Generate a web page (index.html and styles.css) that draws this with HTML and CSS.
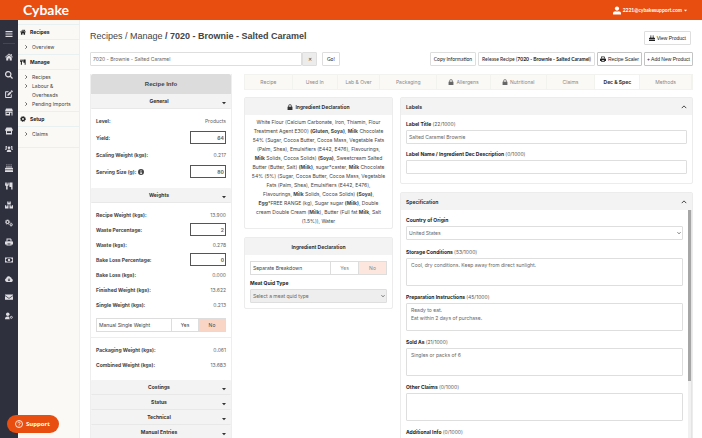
FILE: index.html
```html
<!DOCTYPE html>
<html lang="en">
<head>
  <meta charset="UTF-8">
  <meta name="viewport" content="width=device-width, initial-scale=1.0">
  <title>Cybake - Recipes</title>
  <link rel="stylesheet" href="styles.css">
</head>
<body>
  <svg class="sprite" aria-hidden="true">
    <symbol id="menu" viewBox="0 0 16 16"><path d="M1 2h14v2.4H1zM1 6.8h14v2.4H1zM1 11.6h14V14H1z"/></symbol>
    <symbol id="home" viewBox="0 0 16 16"><path d="M8 1 0 8l1 1.2L8 3.200l7 6L16 8l-2.500-2.200V2h-2v2.100zM8 4.500 2.500 9.200V15h4v-4h3v4h4V9.200z"/></symbol>
    <symbol id="search" viewBox="0 0 16 16"><path fill-rule="evenodd" d="M6.500 0a6.500 6.500 0 1 0 3.700 11.800L14.200 16l1.800-1.800-4.200-4A6.500 6.500 0 0 0 6.500 0zm0 2.400a4.100 4.100 0 1 1 0 8.200 4.100 4.100 0 0 1 0-8.200z"/></symbol>
    <symbol id="edit" viewBox="0 0 16 16"><path d="M12.600.800a1.200 1.200 0 0 1 1.700 0l1 1a1.200 1.200 0 0 1 0 1.700L14 4.800 11.300 2.100zM10.500 3l2.700 2.700-5.500 5.500-3 .500.400-3.200zM1.500 2.500H8l-2 2H2.200v9.300h9.300V10l2-2v6.500a1.300 1.300 0 0 1-1.300 1.300H1.500A1.400 1.400 0 0 1 .200 14.500V3.800a1.300 1.300 0 0 1 1.300-1.300z"/></symbol>
    <symbol id="store" viewBox="0 0 16 16"><path fill-rule="evenodd" d="M2 1h12l2 5.500H0zM1 7.500h14V15h-2V9.500h-3V15H1zM3 9.500V12h5V9.500z"/></symbol>
    <symbol id="shop" viewBox="0 0 16 16"><path fill-rule="evenodd" d="M3 1h10l2.500 4v1.500a1.800 1.800 0 0 1-1.500 1.700V15H2V8.200A1.800 1.800 0 0 1 .500 6.500V5zM4 8.500V12h8V8.500z"/></symbol>
    <symbol id="users" viewBox="0 0 16 16"><circle cx="8" cy="5.500" r="2.600"/><circle cx="2.600" cy="3.800" r="1.800"/><circle cx="13.400" cy="3.800" r="1.800"/><path d="M3.500 14c0-3 1.600-5 4.500-5s4.500 2 4.500 5zM0 9.500C0 7.500 1 6.300 2.800 6.300c.700 0 1.300.200 1.800.700a5 5 0 0 0-1.500 2.500zM16 9.500c0-2-1-3.200-2.800-3.200-.700 0-1.300.200-1.800.700a5 5 0 0 1 1.500 2.500z"/></symbol>
    <symbol id="cake" viewBox="0 0 16 16"><path d="M3 3.500h1.800V7H3zM7.100 3.500h1.800V7H7.100zM11.200 3.500H13V7h-1.800zM3.900 0l.9 1.500-.9 1.200L3 1.500zM8 0l.9 1.500L8 2.700l-.9-1.200zM12.100 0l.9 1.500-.9 1.200-.9-1.200zM1.500 7.500h13A1.500 1.500 0 0 1 16 9v1.500c-1.500 1.500-2.500.500-4 0-1.500 1-2.500 1-4 0-1.500 1-2.500 1-4 0-1.500.800-2.500 1.200-4 0V9a1.500 1.500 0 0 1 1.500-1.500zM0 12.400c1.500.600 2.500.400 4-.400 1.500.900 2.500.900 4 0 1.500.900 2.500.900 4 0 1.500.800 2.500.900 4 .400V16H0z"/></symbol>
    <symbol id="utensils" viewBox="0 0 16 16"><path d="M0 1h1.400l.4 4h.6L2.700 1h1.500l.4 4h.6l.4-4H7c.8 4.500.5 6-1.800 7.200V15H2.300V8.200C-.300 7-.500 5.500 0 1zM9 1h6v14h-2.600v-5H9C8.500 6 8.500 3.500 9 1z"/></symbol>
    <symbol id="boxes" viewBox="0 0 16 16"><path d="M4.500 1H7v2.500h2V1h2.500v6h-7zM0 8.500h2.500V11h2V8.500H7v6.500H0zM9 8.500h2.500V11h2V8.500H16v6.500H9z"/></symbol>
    <symbol id="cogs" viewBox="0 0 16 16"><circle cx="5" cy="6" r="3" fill="none" stroke="currentColor" stroke-width="2.400"/><circle cx="5" cy="6" r="4.600" fill="none" stroke="currentColor" stroke-width="1.400" stroke-dasharray="1.800 1.800"/><circle cx="12.300" cy="11.300" r="2" fill="none" stroke="currentColor" stroke-width="1.800"/><circle cx="12.300" cy="11.300" r="3.100" fill="none" stroke="currentColor" stroke-width="1.200" stroke-dasharray="1.300 1.300"/></symbol>
    <symbol id="cog" viewBox="0 0 16 16"><circle cx="8" cy="8" r="4.200" fill="none" stroke="currentColor" stroke-width="3.600"/><circle cx="8" cy="8" r="6.800" fill="none" stroke="currentColor" stroke-width="2.200" stroke-dasharray="3.100 2.240"/></symbol>
    <symbol id="print" viewBox="0 0 16 16"><path fill-rule="evenodd" d="M3 1h8.500L13 2.500V6H3zM5 3v3h6V3zM2 6.500h12a2 2 0 0 1 2 2V13h-3v2H3v-2H0V8.500a2 2 0 0 1 2-2zM5 11v2.200h6V11z"/></symbol>
    <symbol id="money" viewBox="0 0 16 16"><path fill-rule="evenodd" d="M0 3h16v10H0zM3.500 4.500a2 2 0 0 1-2 2v3a2 2 0 0 1 2 2h9a2 2 0 0 1 2-2v-3a2 2 0 0 1-2-2z"/><ellipse cx="8" cy="8" rx="2.200" ry="2.700"/></symbol>
    <symbol id="cloud" viewBox="0 0 16 16"><path fill-rule="evenodd" d="M4 14a4 4 0 0 1-1.400-7.700A4.500 4.500 0 0 1 11 4.600a3 3 0 0 1 2.300 3A3.300 3.300 0 0 1 12.800 14zM7 7v2.500H5L8 12.500l3-3H9V7z"/></symbol>
    <symbol id="envelope" viewBox="0 0 16 16"><path d="M0 3h16v1.500L8 10 0 4.500zM0 6.200 8 11.700l8-5.500V13.500H0z"/></symbol>
    <symbol id="usercog" viewBox="0 0 16 16"><circle cx="5.500" cy="4.500" r="3.500"/><path d="M0 14.500C0 11 1.500 9 5 9c1.700 0 2.800.300 3.600 1-.4 1.600 0 3.300 1.200 4.500z"/><circle cx="12.700" cy="10.700" r="2" fill="none" stroke="currentColor" stroke-width="1.800"/></symbol>
    <symbol id="user" viewBox="0 0 16 16"><circle cx="8" cy="4.200" r="4.200"/><path d="M0 16v-2.500C0 10.800 2 9.300 4.500 9.300c2 1 5 1 7 0 2.500 0 4.500 1.500 4.500 4.200V16z"/></symbol>
    <symbol id="lock" viewBox="0 0 16 16"><path d="M1.500 7h2V5a4.500 4.500 0 0 1 9 0v2h2v9h-13zM5.700 7h4.600V5a2.300 2.300 0 0 0-4.600 0z"/></symbol>
    <symbol id="info" viewBox="0 0 16 16"><path fill-rule="evenodd" d="M8 0a8 8 0 1 0 0 16A8 8 0 0 0 8 0zM6.800 3h2.600v2.200H6.800zM6 6.700h3.400v4.500h1V13H6v-1.800h1V8.500H6z"/></symbol>
    <symbol id="right" viewBox="0 0 16 16"><path d="m5 1 7 7-7 7" fill="none" stroke="currentColor" stroke-width="3"/></symbol>
    <symbol id="up" viewBox="0 0 16 16"><path d="m2 11 6-6 6 6" fill="none" stroke="currentColor" stroke-width="2.400"/></symbol>
    <symbol id="down" viewBox="0 0 16 16"><path d="m2 5 6 6 6-6" fill="none" stroke="currentColor" stroke-width="3"/></symbol>
    <symbol id="caret" viewBox="0 0 16 16"><path d="M0 4h16l-8 9z"/></symbol>
    <symbol id="help" viewBox="0 0 16 16"><circle cx="8" cy="8" r="7" fill="none" stroke="currentColor" stroke-width="1.700"/><path d="M5.700 6.500a2.300 2.300 0 1 1 3.600 1.900C8.300 9 8 9.300 8 10.200M8 11.200v1.600" fill="none" stroke="currentColor" stroke-width="1.600"/></symbol>
  </svg>

  <header class="topbar">
    <a class="logo" href="#">Cybake</a>
    <a class="account" href="#"><svg class="icon-lg"><use href="#user"/></svg><span>2221@cybakesupport.com</span><svg class="icon-tiny"><use href="#caret"/></svg></a>
  </header>

  <div class="shell">
    <nav class="rail" aria-label="Main">
      <a class="rail-menu" href="#" aria-label="Menu"><svg><use href="#menu"/></svg></a>
      <a href="#" aria-label="Home"><svg><use href="#home"/></svg></a>
      <a href="#" aria-label="Search"><svg><use href="#search"/></svg></a>
      <a href="#" aria-label="Edit"><svg><use href="#edit"/></svg></a>
      <a href="#" aria-label="Stores"><svg><use href="#store"/></svg></a>
      <a href="#" aria-label="Shop"><svg><use href="#shop"/></svg></a>
      <a href="#" aria-label="Customers"><svg><use href="#users"/></svg></a>
      <a href="#" aria-label="Products"><svg><use href="#cake"/></svg></a>
      <a href="#" aria-label="Recipes"><svg><use href="#utensils"/></svg></a>
      <a href="#" aria-label="Stock"><svg><use href="#boxes"/></svg></a>
      <a href="#" aria-label="Production"><svg><use href="#cogs"/></svg></a>
      <a href="#" aria-label="Print"><svg><use href="#print"/></svg></a>
      <a href="#" aria-label="Finance"><svg><use href="#money"/></svg></a>
      <a href="#" aria-label="Downloads"><svg><use href="#cloud"/></svg></a>
      <a href="#" aria-label="Messages"><svg><use href="#envelope"/></svg></a>
      <a href="#" aria-label="User settings"><svg><use href="#usercog"/></svg></a>
    </nav>

    <nav class="sidebar" aria-label="Recipes">
      <h2><svg class="icon"><use href="#home"/></svg>Recipes</h2>
      <ul>
        <li><svg class="icon-xs"><use href="#right"/></svg><a href="#">Overview</a></li>
      </ul>
      <h2><svg class="icon"><use href="#utensils"/></svg>Manage</h2>
      <ul>
        <li><svg class="icon-xs"><use href="#right"/></svg><a href="#">Recipes</a></li>
        <li><svg class="icon-xs"><use href="#right"/></svg><a href="#">Labour &amp; Overheads</a></li>
        <li><svg class="icon-xs"><use href="#right"/></svg><a href="#">Pending Imports</a></li>
      </ul>
      <h2><svg class="icon"><use href="#cog"/></svg>Setup</h2>
      <ul>
        <li><svg class="icon-xs"><use href="#right"/></svg><a href="#">Claims</a></li>
      </ul>
    </nav>

    <main class="main">
      <div class="title-row">
        <h1>Recipes / Manage <b>/ 7020 - Brownie - Salted Caramel</b></h1>
        <button class="btn btn-view"><svg class="icon"><use href="#cake"/></svg>View Product</button>
      </div>

      <div class="toolbar">
        <div class="combo">
          <input type="text" aria-label="Recipe" value="7020 - Brownie - Salted Caramel">
          <button aria-label="Clear">✕</button>
        </div>
        <button class="btn btn-go">Go!</button>
        <div class="actions">
          <button class="btn">Copy Information</button>
          <button class="btn"><span>Release Recipe (<b>7020 - Brownie - Salted Caramel</b>)</span></button>
          <button class="btn btn-dark"><svg class="icon"><use href="#print"/></svg>Recipe Scaler</button>
          <button class="btn btn-dark">+ Add New Product</button>
        </div>
      </div>

      <div class="columns">
        <section class="info">
          <h2>Recipe Info</h2>
          <button class="info-head">General<svg class="icon-xs"><use href="#caret"/></svg></button>
          <div class="info-body general">
            <div class="row"><span>Level:</span><output>Products</output></div>
            <div class="row"><label for="yield">Yield:</label><input id="yield" type="text" value="64"></div>
            <div class="row"><span>Scaling Weight (kgs):</span><output>0.217</output></div>
            <div class="row"><label for="serving">Serving Size (g): <svg class="icon"><use href="#info"/></svg></label><input id="serving" type="text" value="80"></div>
          </div>
          <button class="info-head">Weights<svg class="icon-xs"><use href="#caret"/></svg></button>
          <div class="info-body">
            <div class="row"><span>Recipe Weight (kgs):</span><output>13.900</output></div>
            <div class="row"><label for="waste">Waste Percentage:</label><input id="waste" type="text" value="2"></div>
            <div class="row"><span>Waste (kgs):</span><output>0.278</output></div>
            <div class="row"><label for="bakeloss">Bake Loss Percentage:</label><input id="bakeloss" type="text" value="0"></div>
            <div class="row"><span>Bake Loss (kgs):</span><output>0.000</output></div>
            <div class="row"><span>Finished Weight (kgs):</span><output>13.622</output></div>
            <div class="row"><span>Single Weight (kgs):</span><output>0.213</output></div>
            <div class="toggle" role="radiogroup" aria-labelledby="manual-weight">
              <span id="manual-weight">Manual Single Weight</span>
              <label><input type="radio" name="manual">Yes</label>
              <label><input type="radio" name="manual" checked>No</label>
            </div>
          </div>
          <div class="info-body totals">
            <div class="row"><span>Packaging Weight (kgs):</span><output>0.061</output></div>
            <div class="row"><span>Combined Weight (kgs):</span><output>13.683</output></div>
          </div>
          <button class="info-head">Costings<svg class="icon-xs"><use href="#caret"/></svg></button>
          <button class="info-head">Status<svg class="icon-xs"><use href="#caret"/></svg></button>
          <button class="info-head">Technical<svg class="icon-xs"><use href="#caret"/></svg></button>
          <button class="info-head">Manual Entries<svg class="icon-xs"><use href="#caret"/></svg></button>
        </section>

        <div class="content">
          <nav class="tabs" aria-label="Recipe sections">
            <a href="#">Recipe</a>
            <a href="#">Used In</a>
            <a href="#">Lab &amp; Over</a>
            <a href="#">Packaging</a>
            <a href="#"><svg class="icon"><use href="#lock"/></svg>Allergens</a>
            <a href="#"><svg class="icon"><use href="#lock"/></svg>Nutritional</a>
            <a href="#">Claims</a>
            <a class="active" href="#">Dec &amp; Spec</a>
            <a href="#">Methods</a>
          </nav>

          <div class="cards">
            <div class="cards-left">
              <section class="card">
                <h3 class="centered"><svg class="icon"><use href="#lock"/></svg>Ingredient Declaration</h3>
                <p class="declaration">White Flour (Calcium Carbonate, Iron, Thiamin, Flour Treatment Agent E300) <b>(Gluten, Soya)</b>, <b>Milk</b> Chocolate<br>54% (Sugar, Cocoa Butter, Cocoa Mass, Vegetable Fats (Palm, Shea), Emulsifiers (E442, E476), Flavourings,<br><b>Milk</b> Solids, Cocoa Solids) <b>(Soya)</b>, Sweetcream Salted Butter (Butter, Salt) <b>(Milk)</b>, sugar*caster, <b>Milk</b> Chocolate<br>54% (5%) (Sugar, Cocoa Butter, Cocoa Mass, Vegetable Fats (Palm, Shea), Emulsifiers (E442, E476),<br>Flavourings, <b>Milk</b> Solids, Cocoa Solids) <b>(Soya)</b>,<br><b>Egg</b>*FREE RANGE (kg), Sugar sugar <b>(Milk)</b>, Double<br>cream Double Cream (<b>Milk</b>), Butter (Full fat <b>Milk</b>, Salt (1.5%)), Water</p>
              </section>

              <section class="card">
                <h3 class="centered">Ingredient Declaration</h3>
                <div class="card-body quid">
                  <div class="toggle soft" role="radiogroup" aria-labelledby="breakdown">
                    <span id="breakdown">Separate Breakdown</span>
                    <label><input type="radio" name="breakdown">Yes</label>
                    <label><input type="radio" name="breakdown" checked>No</label>
                  </div>
                  <div class="field">
                    <label for="meat">Meat Quid Type</label>
                    <div class="select select-grey">
                      <select id="meat"><option>Select a meat quid type</option></select>
                      <svg class="icon-xs"><use href="#down"/></svg>
                    </div>
                  </div>
                </div>
              </section>
            </div>

            <div class="cards-right">
              <section class="card">
                <h3>Labels<svg class="icon"><use href="#up"/></svg></h3>
                <div class="card-body labels">
                  <div class="field">
                    <label for="label-title">Label Title <span>(22/1000)</span></label>
                    <input id="label-title" type="text" value="Salted Caramel Brownie">
                  </div>
                  <div class="field">
                    <label for="label-name">Label Name / Ingredient Dec Description <span>(0/1000)</span></label>
                    <input id="label-name" type="text">
                  </div>
                </div>
              </section>

              <section class="card">
                <h3>Specification<svg class="icon"><use href="#up"/></svg></h3>
                <div class="spec-view">
                  <div class="card-body spec-fields">
                    <div class="field">
                      <label for="country">Country of Origin</label>
                      <div class="select">
                        <select id="country"><option>United States</option></select>
                        <svg class="icon-xs"><use href="#down"/></svg>
                      </div>
                    </div>
                    <div class="field">
                      <label for="storage">Storage Conditions <span>(53/1000)</span></label>
                      <textarea id="storage">Cool, dry conditions. Keep away from direct sunlight.</textarea>
                    </div>
                    <div class="field">
                      <label for="prep">Preparation Instructions <span>(45/1000)</span></label>
                      <textarea id="prep">Ready to eat.
Eat within 2 days of purchase.</textarea>
                    </div>
                    <div class="field">
                      <label for="sold">Sold As <span>(21/1000)</span></label>
                      <textarea id="sold">Singles or packs of 6</textarea>
                    </div>
                    <div class="field">
                      <label for="claims">Other Claims <span>(0/1000)</span></label>
                      <textarea id="claims"></textarea>
                    </div>
                    <div class="field">
                      <label for="additional">Additional Info <span>(0/1000)</span></label>
                      <textarea id="additional"></textarea>
                    </div>
                  </div>
                  <div class="scrollbar" aria-hidden="true"><div class="thumb"></div></div>
                </div>
              </section>
            </div>
          </div>
        </div>
      </div>
    </main>
  </div>

  <button class="support"><svg><use href="#help"/></svg>Support</button>
</body>
</html>
```

FILE: styles.css
```css
* { box-sizing: border-box; margin: 0; padding: 0; }
body {
  font-family: Inter, "Liberation Sans", Arial, sans-serif;
  font-size: 5px;
  line-height: 8px;
  color: #444;
  background: #fff;
  height: 100vh;
  overflow: hidden;
  display: flex;
  flex-direction: column;
}
button, input, select, textarea {
  font: inherit;
  color: inherit;
  border: 1px solid #dedede;
  background: #fff;
  border-radius: 1px;
}
a { color: inherit; text-decoration: none; }
ul { list-style: none; }
svg { fill: currentColor; flex: none; }
.sprite { position: absolute; width: 0; height: 0; }
.icon { width: 6px; height: 6px; }
.icon-xs { width: 4px; height: 4px; }
.icon-tiny { width: 3px; height: 3px; }
.icon-lg { width: 8px; height: 9px; }

/* top bar */
.topbar {
  flex: none;
  height: 20px;
  padding: 0 15px 0 23px;
  display: flex;
  align-items: center;
  justify-content: space-between;
  background: #e84e10;
  color: #fff;
}
.logo { font: bold 14px/18px Lato, sans-serif; }
.account { display: flex; align-items: center; gap: 2px; font: bold 5px/8px Lato, sans-serif; }

.shell { flex: 1; min-height: 0; display: flex; }

/* icon rail */
.rail {
  flex: none;
  width: 18px;
  padding: 4px 3px;
  background: #2f303e;
  color: #dedee2;
}
.rail a { height: 18px; display: flex; align-items: center; justify-content: center; }
.rail a:nth-child(even) { height: 19px; }
.rail svg { width: 8px; height: 8px; }
.rail .rail-menu { border-bottom: 1px solid #454654; margin-bottom: 3px; height: 20px; }

/* section menu */
.sidebar {
  flex: none;
  width: 62px;
  padding-top: 4px;
  background: #faf9f5;
  border-right: 1px solid #eee;
}
.sidebar h2 {
  display: flex;
  align-items: center;
  gap: 4px;
  height: 16px;
  padding: 0 2px;
  font-size: 5px;
  color: #222;
  border-top: 1px solid #e9f0f2;
  border-bottom: 1px solid #e9f0f2;
}
.sidebar ul { padding: 3px 2px 2px 6px; }
.sidebar ul:last-child { padding-bottom: 8px; border-bottom: 1px solid #e9f0f2; }
.sidebar li { display: flex; gap: 4px; line-height: 9px; }
.sidebar li svg { margin-top: 2px; }
.sidebar li a { max-width: 42px; }

/* page */
.main { flex: 1; min-width: 0; padding: 11px 9px 0 10px; }
.title-row { display: flex; justify-content: space-between; height: 21px; padding-right: 2px; }
h1 { font: 9px/10px "Liberation Sans", Arial, sans-serif; color: #444; }
.btn {
  height: 14px;
  padding: 0 3px;
  display: flex;
  align-items: center;
  gap: 2px;
  font: 5px/8px Lato, Arial, sans-serif;
  color: #222;
  white-space: nowrap;
}
.btn-go { padding: 0 4px; }
.btn-view { padding: 0 4px; font-family: "Liberation Sans", Arial, sans-serif; }
.btn-dark { padding: 0 2px; border-color: #c4c4c4; font-family: "Liberation Sans", Arial, sans-serif; }
.toolbar { display: flex; gap: 5px; height: 22px; }
.combo { display: flex; width: 227px; height: 14px; }
.combo input { flex: 1; min-width: 0; padding: 0 2px; color: #666; }
.combo button { width: 15px; background: #ececec; }
.actions { display: flex; gap: 2px; margin-left: auto; }
.columns { display: flex; gap: 12px; align-items: flex-start; }

/* recipe info */
.info { flex: none; width: 142px; border: 1px solid #eee; border-top: 0; }
.info h2 {
  height: 20px;
  font: bold 6px/20px "Liberation Sans", Arial, sans-serif;
  text-align: center;
  background: #dcdcdc;
  border-radius: 2px 2px 0 0;
}
.info-head {
  position: relative;
  display: block;
  width: 100%;
  height: 15px;
  padding-right: 4px;
  font-weight: bold;
  color: #333;
  text-align: center;
  background: #f3f3f3;
  border: 0;
  border-bottom: 1px solid #e8e8e8;
}
.info-head svg { position: absolute; right: 5px; bottom: 3px; }
.info-body { padding: 4px 5px 5px; }
.row { display: flex; align-items: center; justify-content: space-between; height: 15px; font-weight: bold; }
.row output { font-weight: normal; color: #666; }
.row label { display: flex; align-items: center; gap: 2px; }
.row input {
  width: 36px;
  height: 13px;
  padding: 0 1px;
  text-align: right;
  border: 1px solid #555;
  border-radius: 0;
  color: #666;
}
.general { display: grid; gap: 2px; padding-bottom: 9px; }
.totals { border-top: 1px solid #eee; padding-bottom: 8px; }
.toggle {
  display: flex;
  height: 14px;
  margin-top: 6px;
  line-height: 12px;
  border: 1px solid #ddd;
}
.toggle span { flex: 1; padding-left: 2px; }
.toggle label { width: 27px; text-align: center; border-left: 1px solid #ddd; }
.toggle input { position: absolute; opacity: 0; width: 1px; height: 1px; }
.toggle label:has(:checked) { background: #f9d5c5; }
.toggle.soft label { width: 28px; color: #888; }
.toggle.soft label:has(:checked) { background: #fde6de; }

/* tabs */
.content { flex: 1; min-width: 0; }
.tabs {
  display: grid;
  grid-template-columns: 48fr 45fr 43fr 57fr 54fr 56fr 49fr 45fr 52fr;
  height: 16px;
  margin-bottom: 7px;
  background: #faf9f6;
  border: 1px solid #f2f2ef;
  color: #888;
}
.tabs a {
  display: flex;
  align-items: center;
  justify-content: center;
  gap: 2px;
  border-right: 1px solid #f2f2ef;
}
.tabs svg { color: #666; }
.tabs .active { background: #fff; color: #333; font-weight: bold; }

/* cards */
.cards { display: flex; gap: 7px; }
.cards-left { flex: 149; min-width: 0; }
.cards-right { flex: 293; min-width: 0; }
.card { margin-bottom: 8px; border: 1px solid #ececec; border-radius: 2px; }
.card h3 {
  display: flex;
  align-items: center;
  justify-content: space-between;
  height: 17px;
  padding: 0 5px;
  font-size: 5px;
  color: #333;
  background: #f3f3f3;
}
.card h3.centered { justify-content: center; gap: 2px; }
.declaration { padding: 3px 5px 2px; line-height: 9px; text-align: center; }
.card-body { display: flex; flex-direction: column; gap: 7px; padding: 5px; }
.quid { gap: 4px; }
.quid .toggle { margin-top: 1px; }
.labels { gap: 6px; padding-bottom: 9px; }
.field { display: flex; flex-direction: column; gap: 2px; }
.field label { font-weight: bold; color: #222; }
.field label span { font-weight: normal; color: #555; }
.field input, .field select { width: 100%; height: 14px; padding: 0 2px; color: #666; }
.field textarea { width: 100%; height: 28px; padding: 2px 4px; color: #666; resize: none; overflow: hidden; display: block; }
.select { position: relative; }
.select select { appearance: none; display: block; }
.select svg { position: absolute; right: 2px; top: 5px; }
.field .select-grey select { background: #eee; }
.spec-view { display: flex; }
.spec-fields { flex: 1; padding-top: 6px; }
.spec-fields .select { margin-bottom: 1px; }
.scrollbar { width: 4px; background: #f1f1f1; border-right: 1px solid #e4e4e4; }
.thumb { height: 171px; background: #a6a6a6; }

/* help */
.support {
  position: fixed;
  left: 7px;
  bottom: 5px;
  height: 18px;
  padding: 0 9px 0 8px;
  display: flex;
  align-items: center;
  gap: 3px;
  font: bold 6px/8px "Noto Sans", sans-serif;
  color: #fff;
  background: #e84e10;
  border: 0;
  border-radius: 9px;
}
.support svg { width: 8px; height: 8px; }
```
